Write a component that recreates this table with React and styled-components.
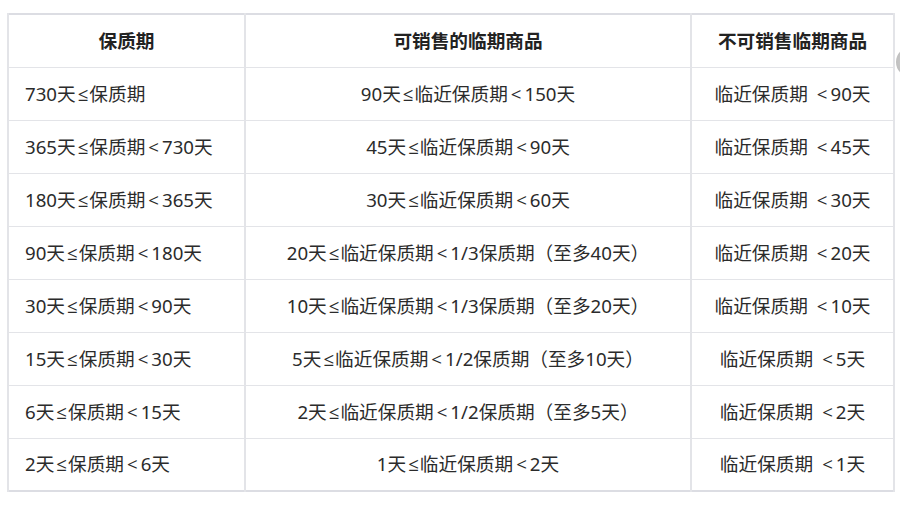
import React from "react";
import styled, { createGlobalStyle } from "styled-components";

const GlobalStyle = createGlobalStyle`
  html, body {
    margin: 0;
    padding: 0;
    background: #fff;
  }
  body {
    font-family: "Noto Sans", "Noto Sans CJK SC", sans-serif;
    color: #333;
  }
`;

const Page = styled.div`
  position: relative;
  width: 900px;
  height: 510px;
  padding: 13px 0 0 7px;
  box-sizing: border-box;
  overflow: hidden;
`;

const Table = styled.table`
  width: 886px;
  border-collapse: collapse;
  table-layout: fixed;
  border: 2px solid #dcdde3;
  font-size: 18.67px;
`;

const Row = styled.tr`
  height: 53px;
`;

const Cell = styled.td`
  border-top: 1px solid #e3e4e8;
  border-bottom: 1px solid #e3e4e8;
  border-left: 2px solid #e3e4e8;
  border-right: 2px solid #e3e4e8;
  padding: 0 0 0 ${(p) => (p.$left ? "16px" : "0")};
  text-align: ${(p) => (p.$left ? "left" : "center")};
  vertical-align: middle;
  line-height: 24px;
  white-space: nowrap;
  color: #2b2b2b;
`;

const HeadCell = styled(Cell).attrs({ as: "th" })`
  font-weight: 700;
  color: #222;
`;

/* comparison signs: latin face, spaced like the original */
const Op = styled.span`
  font-family: "Open Sans", "Noto Sans", sans-serif;
  margin: ${(p) => p.$m};
`;

const SideButton = styled.div`
  position: absolute;
  left: 896px;
  top: 47px;
  width: 30px;
  height: 30px;
  border-radius: 50%;
  background: radial-gradient(circle at 40% 50%, #d2d2d2 0%, #b9b9b9 70%, #a9a9a9 100%);
`;

const rows = [
  ["730天≤保质期", "90天≤临近保质期<150天", "临近保质期 <90天"],
  ["365天≤保质期<730天", "45天≤临近保质期<90天", "临近保质期 <45天"],
  ["180天≤保质期<365天", "30天≤临近保质期<60天", "临近保质期 <30天"],
  ["90天≤保质期<180天", "20天≤临近保质期<1/3保质期（至多40天）", "临近保质期 <20天"],
  ["30天≤保质期<90天", "10天≤临近保质期<1/3保质期（至多20天）", "临近保质期 <10天"],
  ["15天≤保质期<30天", "5天≤临近保质期<1/2保质期（至多10天）", "临近保质期 <5天"],
  ["6天≤保质期<15天", "2天≤临近保质期<1/2保质期（至多5天）", "临近保质期 <2天"],
  ["2天≤保质期<6天", "1天≤临近保质期<2天", "临近保质期 <1天"],
];

function Text({ value }) {
  return value.split(/( ?[≤<])/).map((part, i) => {
    if (part === "≤") return <Op key={i} $m="0 1px 0 2px">≤</Op>;
    if (part === "<") return <Op key={i} $m="0 3px">&lt;</Op>;
    if (part === " <") return <Op key={i} $m="0 3px 0 9px">&lt;</Op>;
    return part;
  });
}

export default function App() {
  return (
    <Page>
      <GlobalStyle />
      <Table>
        <colgroup>
          <col style={{ width: 237 }} />
          <col style={{ width: 446 }} />
          <col style={{ width: 203 }} />
        </colgroup>
        <thead>
          <Row>
            <HeadCell>保质期</HeadCell>
            <HeadCell>可销售的临期商品</HeadCell>
            <HeadCell>不可销售临期商品</HeadCell>
          </Row>
        </thead>
        <tbody>
          {rows.map((r, i) => (
            <Row key={i}>
              <Cell $left><Text value={r[0]} /></Cell>
              <Cell><Text value={r[1]} /></Cell>
              <Cell><Text value={r[2]} /></Cell>
            </Row>
          ))}
        </tbody>
      </Table>
      <SideButton />
    </Page>
  );
}
